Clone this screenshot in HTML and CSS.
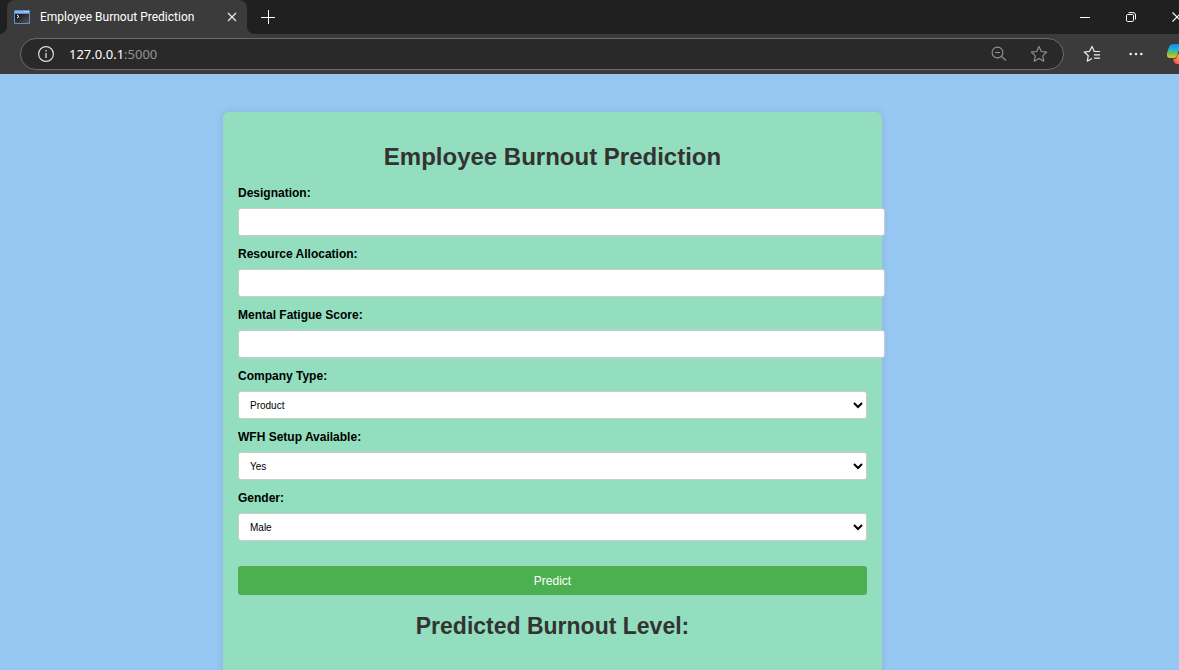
FILE: index.html
```html
<!DOCTYPE html>
<html lang="en">
<head>
<meta charset="utf-8">
<meta name="viewport" content="width=device-width, initial-scale=1">
<title>Employee Burnout Prediction</title>
<link rel="stylesheet" href="styles.css">
</head>
<body>
<header class="browser">
  <div class="tabstrip">
    <div class="tab">
      <svg class="favicon" width="16" height="14" viewBox="0 0 16 14"><defs><linearGradient id="term" x1="0" y1="0" x2="1" y2="1"><stop offset="0" stop-color="#111"/><stop offset="1" stop-color="#555"/></linearGradient></defs><rect width="16" height="14" rx="1" fill="#5f8fd0"/><rect x="1" y="1" width="14" height="2" fill="#8ab4ea"/><path d="M10 1.5h1M12 1.5h1M14 1.5h1" stroke="#d9e8ff"/><rect x="1" y="4" width="14" height="9" fill="url(#term)"/><path d="M3 5l2 1.5L3 8" fill="none" stroke="#fff"/></svg>
      <span class="tab-title">Employee Burnout Prediction</span>
      <button class="icon-button tab-close" aria-label="Close tab"><svg width="10" height="10" viewBox="0 0 10 10"><path d="M1 1l8 8M9 1l-8 8" stroke="#eee" stroke-width="1.2"/></svg></button>
    </div>
    <button class="icon-button new-tab" aria-label="New tab"><svg width="14" height="14" viewBox="0 0 14 14"><path d="M7.5 0v14M0 7.5h14" stroke="#fff"/></svg></button>
    <div class="window-buttons">
      <button class="icon-button" aria-label="Minimize"><svg width="10" height="10" viewBox="0 0 10 10"><path d="M0 5.5h10" stroke="#fff"/></svg></button>
      <button class="icon-button" aria-label="Restore"><svg width="10" height="10" viewBox="0 0 10 10" fill="none" stroke="#fff"><rect x=".5" y="2.5" width="7" height="7" rx="1.2"/><path d="M2.5.6H7Q9.5.6 9.5 3v4.5"/></svg></button>
      <button class="icon-button" aria-label="Close"><svg width="10" height="10" viewBox="0 0 10 10"><path d="M.5.5l9 9M9.5.5l-9 9" stroke="#fff" stroke-width="1.1"/></svg></button>
    </div>
  </div>
  <div class="toolbar">
    <div class="address">
      <button class="icon-button" aria-label="Site information"><svg width="16" height="16" viewBox="0 0 16 16" fill="none" stroke="#ddd"><circle cx="8" cy="8" r="7.4" stroke-width="1.2"/><path d="M8 7v5M8 4v1.4" stroke-width="1.3"/></svg></button>
      <div class="url" role="textbox" aria-label="Address" tabindex="0">127.0.0.1<span class="port">:5000</span></div>
      <button class="icon-button address-action" aria-label="Zoom"><svg width="16" height="16" viewBox="0 0 16 16" fill="none" stroke="#939393" stroke-width="1.1"><circle cx="6.5" cy="6.5" r="5.4"/><path d="M10.5 10.5l4.5 4M4 6.5h5"/></svg></button>
      <button class="icon-button address-action" aria-label="Add to favorites"><svg width="18" height="18" viewBox="0 0 18 18" fill="none" stroke="#939393" stroke-width="1.1" stroke-linejoin="round"><path d="M9 1.5l2.3 5 5.4.6-4 3.7 1.1 5.4L9 13.5l-4.8 2.7 1.1-5.4-4-3.7 5.4-.6z"/></svg></button>
    </div>
    <nav class="toolbar-actions" aria-label="Browser tools">
      <button class="icon-button" aria-label="Favorites"><svg width="18" height="18" viewBox="0 0 18 18" fill="none" stroke="#eee" stroke-width="1.2" stroke-linejoin="round"><path d="M9 13.5l-4.700 2.700 1-5.500L1.300 7l5.200-.7L9 1.500l2.300 5H17M11 9.800h6M11 13.200h6"/></svg></button>
      <button class="icon-button" aria-label="Settings and more"><svg width="14" height="4" viewBox="0 0 14 4" fill="#eee"><circle cx="1.700" cy="2" r="1.300"/><circle cx="7" cy="2" r="1.300"/><circle cx="12.300" cy="2" r="1.300"/></svg></button>
      <button class="icon-button" aria-label="Copilot"><svg width="26" height="22" viewBox="0 0 26 22"><defs><linearGradient id="cool" x1="0" y1="0" x2="0" y2="1"><stop offset="0" stop-color="#1788ea"/><stop offset=".35" stop-color="#20aee0"/><stop offset=".65" stop-color="#64c553"/><stop offset="1" stop-color="#f5c11a"/></linearGradient><linearGradient id="warm" x1="0" y1="1" x2="1" y2="0"><stop offset="0" stop-color="#f0453d"/><stop offset=".4" stop-color="#ff965f"/><stop offset="1" stop-color="#b45be8"/></linearGradient></defs><path d="M7 1h9q-2 0-3 3l-3 9q-.7 2-3 2H3q-4 0-3-5l2-6q1-3 5-3z" fill="url(#cool)"/><path d="M14 1h3q2 0 2.500 2l.5 3h-5q-2 0-3 3l1-5q.5-3 1-3z" fill="#1461c9"/><path d="M18 21h-8q-2 0-3-2l-1-3h1q2.300 0 3-2l1-3 3 0 2-4h5q4 0 3 5l-2 5q-1 4-4 4z" fill="url(#warm)"/></svg></button>
    </nav>
  </div>
</header>
<main class="page">
  <section class="card">
    <h1 class="title">Employee Burnout Prediction</h1>
    <form class="form">
      <label class="label" for="designation">Designation:</label>
      <input class="field" type="text" id="designation" name="designation">
      <label class="label" for="resource">Resource Allocation:</label>
      <input class="field" type="text" id="resource" name="resource">
      <label class="label" for="fatigue">Mental Fatigue Score:</label>
      <input class="field" type="text" id="fatigue" name="fatigue">
      <label class="label" for="company">Company Type:</label>
      <select class="field select" id="company" name="company"><option>Product</option><option>Service</option></select>
      <label class="label" for="wfh">WFH Setup Available:</label>
      <select class="field select" id="wfh" name="wfh"><option>Yes</option><option>No</option></select>
      <label class="label" for="gender">Gender:</label>
      <select class="field select" id="gender" name="gender"><option>Male</option><option>Female</option></select>
      <button class="submit" type="button">Predict</button>
    </form>
    <h2 class="title result">Predicted Burnout Level:</h2>
  </section>
</main>
</body>
</html>
```
FILE: styles.css
```css
body {
  margin: 0;
  height: 100vh;
  display: flex;
  flex-direction: column;
  overflow: hidden;
  background: #97c7f3;
  font-family: "Liberation Sans", Arial, sans-serif;
}

.browser {
  flex: none;
  background: #3b3b3b;
  color: #fff;
  font-family: "Noto Sans", "Open Sans", sans-serif;
  overflow: hidden;
}

.icon-button {
  display: flex;
  align-items: center;
  justify-content: center;
  padding: 0;
  border: 0;
  background: none;
}

.tabstrip {
  display: flex;
  height: 34px;
  padding-left: 7px;
  background: #202020;
}

.tab {
  position: relative;
  display: flex;
  align-items: center;
  box-sizing: border-box;
  width: 240px;
  padding: 0 10px 0 7px;
  background: #3b3b3b;
  border-radius: 8px 8px 0 0;
}

.tab::before,
.tab::after {
  content: "";
  position: absolute;
  bottom: 0;
  width: 8px;
  height: 8px;
}

.tab::before {
  right: 100%;
  background: radial-gradient(circle at 0 0, transparent 8px, #3b3b3b 8px);
}

.tab::after {
  left: 100%;
  background: radial-gradient(circle at 100% 0, transparent 8px, #3b3b3b 8px);
}

.tab-title {
  flex: 1;
  margin-left: 10px;
  font-family: Roboto, "Noto Sans", sans-serif;
  font-size: 12px;
  line-height: 16px;
  white-space: nowrap;
}

.new-tab {
  width: 42px;
}

.window-buttons {
  display: flex;
  margin-left: auto;
  margin-right: -21px;
}

.window-buttons .icon-button {
  width: 46px;
}

.toolbar {
  display: flex;
  align-items: center;
  height: 40px;
  padding-left: 20px;
}

.address {
  flex: 1;
  display: flex;
  align-items: center;
  box-sizing: border-box;
  height: 32px;
  padding: 0 4px 0 17px;
  border: 1px solid #6b6b6b;
  border-radius: 16px;
  background: #292929;
}

.url {
  flex: 1;
  margin-left: 15px;
  font-size: 13px;
  line-height: 18px;
}

.port {
  color: #939393;
}

.address-action {
  width: 40px;
}

.toolbar-actions {
  display: flex;
  margin: 0 -23px 0 6px;
}

.toolbar-actions .icon-button {
  width: 44px;
}

.page {
  flex: 1;
  min-height: 0;
  overflow-y: auto;
  scrollbar-width: none;
  padding: 38px 297px 38px 223px;
}

.card {
  padding: 30px 15px;
  border-radius: 6px;
  background: #93debf;
  box-shadow: 0 0 8px rgba(0, 0, 0, 0.1);
}

.title {
  margin: 0;
  color: #333;
  font-size: 24px;
  line-height: 30px;
  text-align: center;
}

.form {
  display: flex;
  flex-direction: column;
  align-items: flex-start;
  margin-top: 13px;
}

.label {
  margin-bottom: 7px;
  font-size: 12px;
  font-weight: bold;
  line-height: 16px;
}

.field {
  width: 100%;
  height: 10px;
  margin: 0 0 10px;
  padding: 8px;
  border: 1px solid #ccc;
  border-radius: 3px;
  background: #fff;
  color: #000;
  font-family: inherit;
  font-size: 10px;
}

.select {
  box-sizing: border-box;
  height: 28px;
  padding: 0 7px;
}

.submit {
  width: 100%;
  height: 29px;
  margin-top: 15px;
  padding: 0;
  border: 0;
  border-radius: 3px;
  background: #4caf50;
  color: #fff;
  font-family: inherit;
  font-size: 12px;
}

.result {
  margin-top: 16px;
  padding-bottom: 20px;
  font-size: 23px;
}
```
